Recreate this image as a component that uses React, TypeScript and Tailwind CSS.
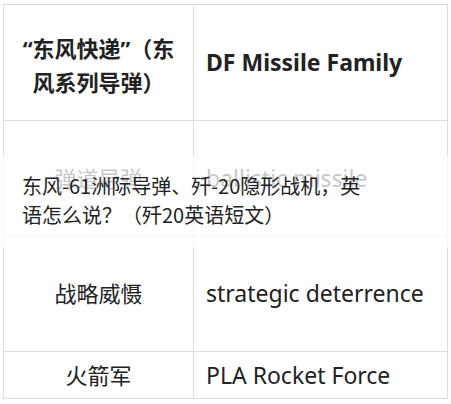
import React from "react";

const font = "font-['Noto_Sans','Noto_Sans_CJK_SC',sans-serif]";

function Row({
  h,
  left,
  right,
  last,
}: {
  h: string;
  left: React.ReactNode;
  right: React.ReactNode;
  last?: boolean;
}) {
  return (
    <div className={`flex ${h} ${last ? "" : "border-b border-[#dcdcdc]"}`}>
      <div className="w-[190px] border-r border-[#dcdcdc] flex items-center justify-center text-center">
        {left}
      </div>
      <div className="flex-1 flex items-center pl-[12px]">{right}</div>
    </div>
  );
}

export default function App() {
  return (
    <div
      className={`relative w-[451px] h-[404px] bg-white overflow-hidden text-[#222] [text-spacing-trim:space-all] ${font}`}
    >
      <div className="ml-[3px] mt-[4px] w-[445px] border border-[#dcdcdc]">
        <Row
          h="h-[116px]"
          left={
            <div className="flex flex-col items-center text-[22px] font-bold pt-[5px]">
              <div className="h-[34px] leading-[34px] whitespace-nowrap">“东风快递”（东</div>
              <div className="h-[34px] leading-[34px] whitespace-nowrap">风系列导弹）</div>
            </div>
          }
          right={<div className="text-[23px] font-bold">DF Missile Family</div>}
        />
        <Row
          h="h-[115px]"
          left={<div className="text-[22px]">弹道导弹</div>}
          right={<div className="text-[23px]">ballistic missile</div>}
        />
        <Row
          h="h-[116px]"
          left={<div className="text-[22px]">战略威慑</div>}
          right={<div className="text-[23px]">strategic deterrence</div>}
        />
        <Row
          h="h-[46px]"
          last
          left={<div className="text-[22px]">火箭军</div>}
          right={<div className="text-[23px]">PLA Rocket Force</div>}
        />
      </div>

      <div className="absolute left-0 top-[155px] w-full h-[93px] bg-white/75 pl-[22px] pt-[16px] text-[20px] leading-[29px] text-[#222] font-['Noto_Sans_CJK_SC',sans-serif]">
        <div className="whitespace-nowrap">东风-61洲际导弹、歼-20隐形战机，英</div>
        <div className="whitespace-nowrap">语怎么说？（歼20英语短文）</div>
      </div>
    </div>
  );
}
